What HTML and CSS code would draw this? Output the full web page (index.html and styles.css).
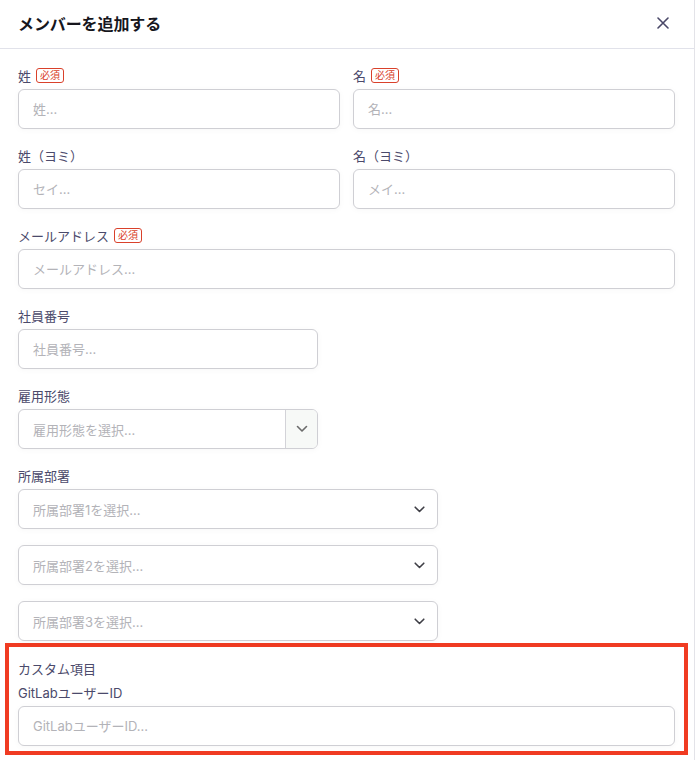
FILE: index.html
```html
<!DOCTYPE html>
<html lang="ja">
<head>
<meta charset="utf-8">
<link rel="stylesheet" href="styles.css">
</head>
<body>
<div class="modal">
  <header class="modal-header">
    <h1 class="modal-title">メンバーを追加する</h1>
    <button class="close" aria-label="閉じる">
      <svg width="12" height="12" viewBox="0 0 12 12"><path d="M1 1L11 11M11 1L1 11" stroke="#4a4868" stroke-width="1.6" stroke-linecap="round"/></svg>
    </button>
  </header>
  <div class="modal-body">
    <div class="grid2">
      <div class="field">
        <div class="label">姓<span class="req">必須</span></div>
        <input class="input" placeholder="姓...">
      </div>
      <div class="field">
        <div class="label">名<span class="req">必須</span></div>
        <input class="input" placeholder="名...">
      </div>
    </div>
    <div class="grid2">
      <div class="field">
        <div class="label">姓（ヨミ）</div>
        <input class="input" placeholder="セイ...">
      </div>
      <div class="field">
        <div class="label">名（ヨミ）</div>
        <input class="input" placeholder="メイ...">
      </div>
    </div>
    <div class="field">
      <div class="label">メールアドレス<span class="req">必須</span></div>
      <input class="input" placeholder="メールアドレス...">
    </div>
    <div class="field w300">
      <div class="label">社員番号</div>
      <input class="input" placeholder="社員番号...">
    </div>
    <div class="field w300">
      <div class="label">雇用形態</div>
      <div class="select split">
        <span class="ph">雇用形態を選択...</span>
        <span class="chev-box">
          <svg width="12" height="8" viewBox="0 0 12 8"><path d="M1.5 1.5L6 6L10.5 1.5" fill="none" stroke="#6b6b6b" stroke-width="1.6" stroke-linecap="round" stroke-linejoin="round"/></svg>
        </span>
      </div>
    </div>
    <div class="field w420">
      <div class="label">所属部署</div>
      <div class="dept-list">
        <div class="select">
          <span class="ph">所属部署1を選択...</span>
          <svg class="chev" width="11" height="7" viewBox="0 0 11 7"><path d="M1.2 1.2L5.5 5.5L9.8 1.2" fill="none" stroke="#3f3f46" stroke-width="1.6" stroke-linecap="round" stroke-linejoin="round"/></svg>
        </div>
        <div class="select">
          <span class="ph">所属部署2を選択...</span>
          <svg class="chev" width="11" height="7" viewBox="0 0 11 7"><path d="M1.2 1.2L5.5 5.5L9.8 1.2" fill="none" stroke="#3f3f46" stroke-width="1.6" stroke-linecap="round" stroke-linejoin="round"/></svg>
        </div>
        <div class="select">
          <span class="ph">所属部署3を選択...</span>
          <svg class="chev" width="11" height="7" viewBox="0 0 11 7"><path d="M1.2 1.2L5.5 5.5L9.8 1.2" fill="none" stroke="#3f3f46" stroke-width="1.6" stroke-linecap="round" stroke-linejoin="round"/></svg>
        </div>
      </div>
    </div>
    <section class="custom">
      <div class="label">カスタム項目</div>
      <div class="label">GitLabユーザーID</div>
      <input class="input" placeholder="GitLabユーザーID...">
    </section>
  </div>
</div>
</body>
</html>
```

FILE: styles.css
```css
* { box-sizing: border-box; }
html, body { margin: 0; padding: 0; background: #fff; }
body {
  font-family: Inter, "Noto Sans CJK JP", sans-serif;
  color: #4b4a6b;
}
.modal {
  width: 695px;
  height: 760px;
  border-right: 1px solid #e3e3e8;
  background: #fff;
  overflow: hidden;
}
.modal-header {
  height: 49px;
  border-bottom: 1px solid #e1e2ea;
  display: flex;
  align-items: center;
  justify-content: space-between;
  padding: 0 25px 2px 18px;
}
.modal-title {
  margin: 0;
  font-size: 16px;
  font-weight: 700;
  color: #16161d;
  font-family: "Noto Sans CJK JP", sans-serif;
  letter-spacing: -0.1px;
}
.close {
  border: 0;
  background: none;
  padding: 0;
  display: flex;
  width: 12px;
  height: 12px;
}
.modal-body {
  padding: 16px 19px 0 18px;
}
.grid2 {
  display: grid;
  grid-template-columns: 1fr 1fr;
  gap: 13px;
}
.field { margin-bottom: 16px; }
.w300 { width: 300px; }
.w420 { width: 420px; }
.label {
  height: 20px;
  display: flex;
  align-items: center;
  gap: 5px;
  font-size: 13px;
  color: #4b4a6b;
  margin-bottom: 4px;
  font-family: Inter, "Noto Sans CJK JP", sans-serif;
}
.req {
  display: inline-flex;
  align-items: center;
  justify-content: center;
  height: 15px;
  padding: 0 3px;
  font-size: 10px;
  color: #d9412b;
  border: 1px solid #d9412b;
  border-radius: 3px;
  line-height: 1;
  font-family: "Noto Sans CJK JP", sans-serif;
}
.input, .select {
  display: block;
  width: 100%;
  height: 40px;
  margin: 0;
  border: 1px solid #cfcfd4;
  border-radius: 6px;
  background: #fff;
  box-shadow: 0 1px 6px rgba(0, 0, 0, 0.035);
  font-family: Inter, "Noto Sans CJK JP", sans-serif;
  font-size: 13px;
  padding: 0 14px;
  color: #333;
  outline: none;
}
.input::placeholder { color: #b3b3b8; }
.ph { color: #b3b3b8; font-size: 13px; }
.select {
  display: flex;
  align-items: center;
  justify-content: space-between;
  padding: 0 12px 0 14px;
}
.select.split { padding-right: 0; overflow: hidden; }
.chev-box {
  width: 32px;
  height: 100%;
  border-left: 1px solid #d3d3d8;
  background: #f7f9f7;
  display: flex;
  align-items: center;
  justify-content: center;
}
.dept-list {
  display: flex;
  flex-direction: column;
  gap: 16px;
}
.custom {
  margin: -14px -13px 0;
  border: 4px solid #f03b22;
  padding: 11px 9px 5px;
}
```
